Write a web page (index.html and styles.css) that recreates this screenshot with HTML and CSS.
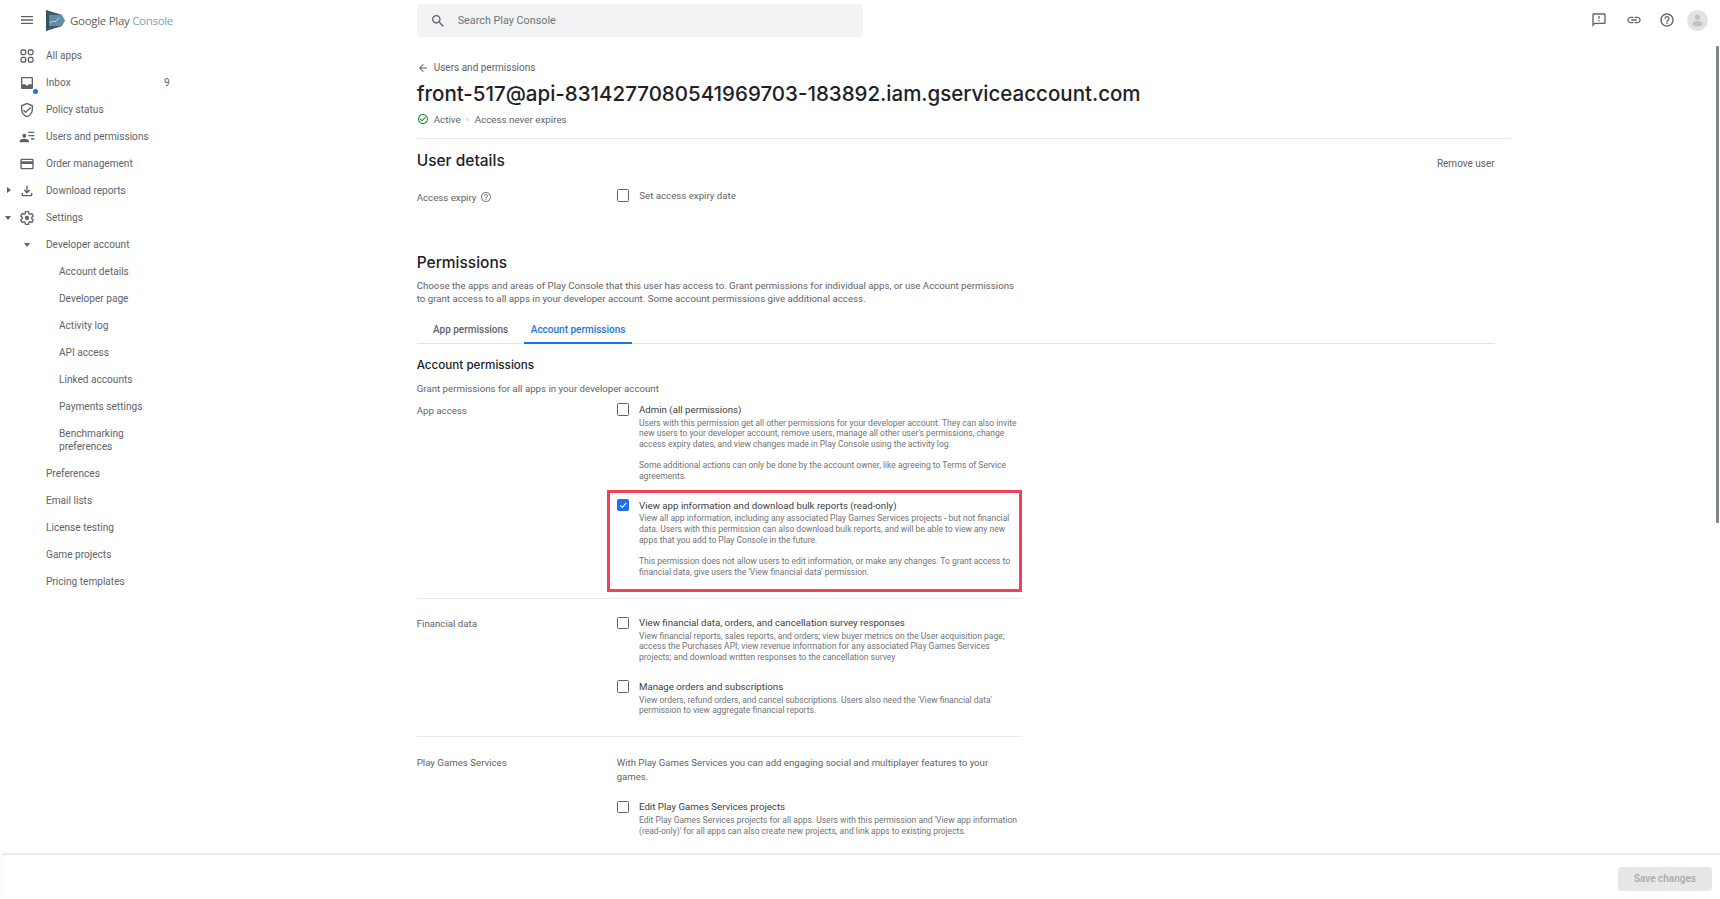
FILE: index.html
```html
<!DOCTYPE html>
<html lang="en">
<head>
<meta charset="utf-8">
<title>Google Play Console</title>
<link rel="stylesheet" href="styles.css">
</head>
<body>
<div class="app">
  <header class="topbar">
    <div class="brand">
      <svg class="ico menu" viewBox="0 0 24 24"><path d="M3 18h18v-2H3v2zm0-5h18v-2H3v2zm0-7v2h18V6H3z"/></svg>
      <svg class="logo" viewBox="0 0 19 21"><path d="M0 0l3 1.500V19.500L0 21z" fill="#37505c"/><path d="M3 1.500L16 5l3 5.500-3 5.500L3 19.500z" fill="#5f8fa8"/><path d="M0 0l16 5H3zM0 21l16-5H3z" fill="#3d5866"/><path d="M4 13l3-2 2 1 4-4" fill="none" stroke="#dbe7ed" stroke-width="1" stroke-dasharray="2 .6"/></svg>
      <span class="brand-name">Google Play <span class="brand-sub">Console</span></span>
    </div>
    <div class="search">
      <svg class="ico" viewBox="0 0 24 24"><path d="M15.500 14h-.79l-.28-.27C15.410 12.590 16 11.110 16 9.500 16 5.910 13.090 3 9.500 3S3 5.910 3 9.500 5.910 16 9.500 16c1.610 0 3.090-.59 4.230-1.570l.27.28v.79l5 4.990L20.490 19l-4.990-5zm-6 0C7.010 14 5 11.990 5 9.500S7.010 5 9.500 5 14 7.010 14 9.500 11.990 14 9.500 14z"/></svg>
      <span>Search Play Console</span>
    </div>
    <div class="actions">
      <svg class="ico" viewBox="0 0 24 24"><path d="M20 2H4c-1.100 0-1.990.9-1.990 2L2 22l4-4h14c1.100 0 2-.9 2-2V4c0-1.100-.9-2-2-2zm0 14H5.170L4 17.170V4h16v12zm-9-4h2v2h-2zm0-6h2v4h-2z"/></svg>
      <svg class="ico" viewBox="0 0 24 24"><path d="M3.900 12c0-1.710 1.390-3.100 3.100-3.100h4V7H7c-2.760 0-5 2.240-5 5s2.240 5 5 5h4v-1.900H7c-1.710 0-3.100-1.390-3.100-3.100zM8 13h8v-2H8v2zm9-6h-4v1.900h4c1.710 0 3.100 1.390 3.100 3.100s-1.390 3.100-3.100 3.100h-4V17h4c2.760 0 5-2.240 5-5s-2.240-5-5-5z"/></svg>
      <svg class="ico" viewBox="0 0 24 24"><path d="M11 18h2v-2h-2v2zm1-16C6.480 2 2 6.480 2 12s4.480 10 10 10 10-4.480 10-10S17.520 2 12 2zm0 18c-4.410 0-8-3.590-8-8s3.590-8 8-8 8 3.590 8 8-3.590 8-8 8zm0-14c-2.210 0-4 1.790-4 4h2c0-1.100.9-2 2-2s2 .9 2 2c0 2-3 1.750-3 5h2c0-2.250 3-2.500 3-5 0-2.210-1.790-4-4-4z"/></svg>
      <svg class="avatar" viewBox="0 0 21 21"><circle cx="10.500" cy="10.500" r="10.500" fill="#e3e3e3"/><circle cx="10.500" cy="7.200" r="2.600" fill="#c2c2c2"/><ellipse cx="10.500" cy="13.800" rx="5.200" ry="2.800" fill="#c2c2c2"/></svg>
    </div>
  </header>

  <div class="body">
    <nav class="sidebar">
      <a class="nav"><svg class="ico" viewBox="0 0 24 24"><g fill="none" stroke="#5f6368" stroke-width="2"><rect x="3" y="3" width="7" height="7" rx="2"/><rect x="14" y="3" width="7" height="7" rx="2"/><rect x="3" y="14" width="7" height="7" rx="2"/><rect x="14" y="14" width="7" height="7" rx="2"/></g></svg><span>All apps</span></a>
      <a class="nav"><span class="icon-wrap"><svg class="ico" viewBox="0 0 24 24"><path d="M19 3H5c-1.100 0-2 .9-2 2v14c0 1.100.9 2 2 2h14c1.100 0 2-.9 2-2V5c0-1.100-.9-2-2-2zm0 11h-4.990c0 1.100-.9 2-2 2s-2-.9-2-2H5V5h14v9z"/></svg><i class="dot"></i></span><span class="grow">Inbox</span><span class="count">9</span></a>
      <a class="nav"><svg class="ico" viewBox="0 0 24 24"><path d="M12 1L3 5v6c0 5.550 3.840 10.740 9 12 5.160-1.260 9-6.450 9-12V5l-9-4zm7 10c0 4.520-2.980 8.690-7 9.930-4.020-1.240-7-5.410-7-9.930V6.300l7-3.110 7 3.110V11z"/><path d="M7.410 11.590L6 13l4 4 8-8-1.410-1.420L10 14.170z"/></svg><span>Policy status</span></a>
      <a class="nav"><svg class="ico" viewBox="0 0 24 24"><circle cx="8" cy="10" r="3"/><path d="M1 20v-2c0-2.200 4.500-3.500 7-3.500s7 1.300 7 3.500v2zM14 4h9v2h-9zM14 9h9v2h-9zM18 14h5v2h-5z"/></svg><span>Users and permissions</span></a>
      <a class="nav"><svg class="ico" viewBox="0 0 24 24"><path d="M20 4H4c-1.110 0-1.990.89-1.990 2L2 18c0 1.110.89 2 2 2h16c1.110 0 2-.89 2-2V6c0-1.110-.89-2-2-2zm0 14H4v-6h16v6zm0-10H4V6h16v2z"/></svg><span>Order management</span></a>
      <a class="nav"><i class="tri tri-right"></i><svg class="ico" viewBox="0 0 24 24"><path d="M18 15v3H6v-3H4v3c0 1.100.9 2 2 2h12c1.100 0 2-.9 2-2v-3h-2zm-1-4l-1.410-1.410L13 12.170V4h-2v8.170L8.410 9.590 7 11l5 5 5-5z"/></svg><span>Download reports</span></a>
      <a class="nav"><i class="tri tri-down"></i><svg class="ico" viewBox="0 0 24 24"><circle cx="12" cy="12" r="3.200"/><path fill="none" stroke="#5f6368" stroke-width="2" d="M19.140 12.940c.04-.3.060-.61.060-.94 0-.32-.02-.64-.07-.94l2.030-1.580a.49.49 0 0 0 .12-.61l-1.920-3.320a.488.488 0 0 0-.59-.22l-2.390.96c-.5-.38-1.030-.7-1.620-.94l-.36-2.540a.484.484 0 0 0-.48-.41h-3.840c-.24 0-.43.17-.47.41l-.36 2.540c-.59.24-1.130.57-1.620.94l-2.390-.96c-.22-.08-.47 0-.59.22L2.740 8.870c-.12.21-.08.47.12.61l2.030 1.580c-.05.3-.09.63-.09.94s.02.64.07.94l-2.030 1.580a.49.49 0 0 0-.12.61l1.920 3.320c.12.22.37.29.59.22l2.390-.96c.5.38 1.030.7 1.620.94l.36 2.540c.05.24.24.41.48.41h3.840c.24 0 .44-.17.47-.41l.36-2.540c.59-.24 1.130-.56 1.620-.94l2.390.96c.22.08.47 0 .59-.22l1.920-3.320c.12-.22.07-.47-.12-.61l-2.010-1.580z"/></svg><span>Settings</span></a>
      <a class="nav"><i class="tri tri-down tri-sub"></i><span>Developer account</span></a>
      <a class="nav sub">Account details</a>
      <a class="nav sub">Developer page</a>
      <a class="nav sub">Activity log</a>
      <a class="nav sub">API access</a>
      <a class="nav sub">Linked accounts</a>
      <a class="nav sub">Payments settings</a>
      <a class="nav sub tall">Benchmarking<br>preferences</a>
      <a class="nav plain">Preferences</a>
      <a class="nav plain">Email lists</a>
      <a class="nav plain">License testing</a>
      <a class="nav plain">Game projects</a>
      <a class="nav plain">Pricing templates</a>
    </nav>

    <main class="content">
      <div class="back">
        <svg class="ico small" viewBox="0 0 24 24"><path d="M20 11H7.830l5.590-5.590L12 4l-8 8 8 8 1.410-1.410L7.830 13H20v-2z"/></svg>
        <span>Users and permissions</span>
      </div>
      <h1 class="title">front-517@api-8314277080541969703-183892.iam.gserviceaccount.com</h1>
      <div class="status">
        <svg class="ico small green" viewBox="0 0 24 24"><path d="M16.590 7.580L10 14.170l-3.590-3.580L5 12l5 5 8-8zM12 2C6.480 2 2 6.480 2 12s4.480 10 10 10 10-4.480 10-10S17.520 2 12 2zm0 18c-4.410 0-8-3.590-8-8s3.590-8 8-8 8 3.590 8 8-3.590 8-8 8z"/></svg>
        <span>Active</span><i class="sep"></i><span>Access never expires</span>
      </div>
      <hr class="rule wide">
      <div class="details-head">
        <h2 class="h2">User details</h2>
        <span class="remove">Remove user</span>
      </div>
      <div class="expiry">
        <div class="label expiry-label">Access expiry
          <svg class="ico help" viewBox="0 0 24 24"><path d="M11 18h2v-2h-2v2zm1-16C6.480 2 2 6.480 2 12s4.480 10 10 10 10-4.480 10-10S17.520 2 12 2zm0 18c-4.410 0-8-3.590-8-8s3.590-8 8-8 8 3.590 8 8-3.590 8-8 8zm0-14c-2.210 0-4 1.790-4 4h2c0-1.100.9-2 2-2s2 .9 2 2c0 2-3 1.750-3 5h2c0-2.250 3-2.500 3-5 0-2.210-1.790-4-4-4z"/></svg>
        </div>
        <div class="check-line"><i class="box"></i><span class="opt-title muted">Set access expiry date</span></div>
      </div>

      <h2 class="h2 perm-head">Permissions</h2>
      <p class="lead">Choose the apps and areas of Play Console that this user has access to. Grant permissions for individual apps, or use Account permissions<br>to grant access to all apps in your developer account. Some account permissions give additional access.</p>
      <div class="tabs">
        <span class="tab">App permissions</span>
        <span class="tab active">Account permissions</span>
      </div>
      <h3 class="h3">Account permissions</h3>
      <p class="grant">Grant permissions for all apps in your developer account</p>

      <section class="group first">
        <div class="label nudge">App access</div>
        <div class="opts">
          <div class="option">
            <i class="box"></i>
            <div>
              <div class="opt-title">Admin (all permissions)</div>
              <p class="desc">Users with this permission get all other permissions for your developer account. They can also invite<br>new users to your developer account, remove users, manage all other user's permissions, change<br>access expiry dates, and view changes made in Play Console using the activity log.</p>
              <p class="desc gap">Some additional actions can only be done by the account owner, like agreeing to Terms of Service<br>agreements.</p>
            </div>
          </div>
          <div class="option marked">
            <i class="box on"><svg viewBox="0 0 12 12"><path d="M2.500 6.200l2.500 2.500 4.600-5.200" fill="none" stroke="#fff" stroke-width="1.300"/></svg></i>
            <div>
              <div class="opt-title">View app information and download bulk reports (read-only)</div>
              <p class="desc">View all app information, including any associated Play Games Services projects - but not financial<br>data. Users with this permission can also download bulk reports, and will be able to view any new<br>apps that you add to Play Console in the future.</p>
              <p class="desc gap">This permission does not allow users to edit information, or make any changes. To grant access to<br>financial data, give users the 'View financial data' permission.</p>
            </div>
            <i class="highlight"></i>
          </div>
        </div>
      </section>
      <hr class="rule narrow">
      <section class="group tight">
        <div class="label nudge">Financial data</div>
        <div class="opts">
          <div class="option">
            <i class="box"></i>
            <div>
              <div class="opt-title">View financial data, orders, and cancellation survey responses</div>
              <p class="desc">View financial reports, sales reports, and orders; view buyer metrics on the User acquisition page;<br>access the Purchases API; view revenue information for any associated Play Games Services<br>projects; and download written responses to the cancellation survey</p>
            </div>
          </div>
          <div class="option">
            <i class="box"></i>
            <div>
              <div class="opt-title">Manage orders and subscriptions</div>
              <p class="desc">View orders, refund orders, and cancel subscriptions. Users also need the 'View financial data'<br>permission to view aggregate financial reports.</p>
            </div>
          </div>
        </div>
      </section>
      <hr class="rule narrow">
      <section class="group">
        <div class="label">Play Games Services</div>
        <div class="opts">
          <p class="games">With Play Games Services you can add engaging social and multiplayer features to your<br>games.</p>
          <div class="option">
            <i class="box"></i>
            <div>
              <div class="opt-title">Edit Play Games Services projects</div>
              <p class="desc">Edit Play Games Services projects for all apps. Users with this permission and 'View app information<br>(read-only)' for all apps can also create new projects, and link apps to existing projects.</p>
            </div>
          </div>
          <div class="option">
            <i class="box"></i>
            <div>
              <div class="opt-title">Publish Play Games Services projects</div>
            </div>
          </div>
        </div>
      </section>
    </main>
    <i class="scrollbar"></i>
  </div>

  <footer class="footer">
    <button class="save">Save changes</button>
  </footer>
</div>
</body>
</html>
```

FILE: styles.css
```css
* { box-sizing: border-box; }
html, body { margin: 0; height: 100%; overflow: hidden; background: #fff; }
body { font-family: Roboto, "Liberation Sans", sans-serif; font-size: 9.700px; color: #5f6368; }
h1, h2, h3, p { margin: 0; font-weight: 500; }
p { font-weight: 400; }
i { font-style: normal; display: block; }

.app { display: flex; flex-direction: column; height: 899px; }
.ico { width: 16px; height: 16px; fill: #5f6368; flex: none; display: block; }

/* top bar */
.topbar { height: 42px; flex: none; display: flex; align-items: center; }
.brand { width: 416.700px; display: flex; align-items: center; padding-left: 19px; padding-bottom: 2px; }
.logo { width: 19px; height: 21px; margin-left: 11px; flex: none; }
.brand-name { margin-left: 5px; font-family: "Open Sans", sans-serif; font-size: 11.500px; letter-spacing: -.3px; color: #5f6368; }
.brand-sub { color: #7f9fb0; }
.search { width: 446px; height: 33px; margin-bottom: 1px; background: #f1f3f4; border-radius: 4px; display: flex; align-items: center; padding-left: 13px; gap: 12px; font-size: 10.800px; color: #6f7377; }
.actions { margin-left: auto; display: flex; align-items: center; padding-right: 12px; padding-bottom: 2px; }
.actions .ico:nth-child(1) { margin-right: 19px; }
.actions .ico:nth-child(2) { margin-right: 17px; }
.actions .ico:nth-child(3) { margin-right: 12px; }
.avatar { width: 21px; height: 21px; display: block; }

.body { flex: 1; min-height: 0; display: flex; position: relative; overflow: hidden; }

/* sidebar */
.sidebar { width: 200px; flex: none; color: #5f6368; font-size: 10.100px; }
.nav { height: 27px; display: flex; align-items: center; padding-left: 19px; gap: 11px; position: relative; white-space: nowrap; }
.nav.sub { padding-left: 59px; }
.nav.plain { padding-left: 46px; }
.nav.tall { height: 40px; line-height: 13.500px; display: block; padding-top: 6.700px; }
.grow { width: 118px; }
.count { margin-left: -11px; }
.icon-wrap { position: relative; display: block; width: 16px; height: 16px; }
.dot { position: absolute; right: -3px; bottom: -3px; width: 5px; height: 5px; border-radius: 50%; background: #1a73e8; border: 0; }
.tri { position: absolute; width: 0; height: 0; }
.tri-right { left: 7px; top: 10px; border-left: 4px solid #5f6368; border-top: 3.500px solid transparent; border-bottom: 3.500px solid transparent; }
.tri-down { left: 5px; top: 12px; border-top: 4px solid #5f6368; border-left: 3.500px solid transparent; border-right: 3.500px solid transparent; }
.tri-sub { left: 24px; }
.nav:has(.tri-sub) { padding-left: 46px; }

/* content */
.content { flex: 1; min-width: 0; padding-left: 216.700px; padding-top: 19px; overflow: hidden; }
.back { display: flex; align-items: center; gap: 5px; height: 13.500px; font-size: 10px; }
.small { width: 12px; height: 12px; }
.title { font-family: Inter, Roboto, sans-serif; font-weight: 500; font-size: 20.500px; line-height: 30px; height: 30px; margin-top: 4px; color: #202124; white-space: nowrap; }
.status { display: flex; align-items: center; gap: 5px; height: 13.500px; margin-top: 4.200px; font-size: 9.800px; }
.green { fill: #1e8e3e; }
.sep { width: 3px; height: 3px; border-radius: 50%; background: #dadce0; margin: 0 .5px; }
.rule { border: 0; border-top: 1px solid #e8eaed; margin: 0; }
.wide { width: 1094px; margin-top: 12px; }
.narrow { width: 605px; }
.details-head { width: 1078px; display: flex; justify-content: space-between; margin-top: 11px; }
.h2 { font-family: Inter, Roboto, sans-serif; font-size: 15.500px; line-height: 22px; color: #202124; }
.remove { margin-top: 6.500px; color: #5f6368; line-height: 13.500px; font-size: 10px; }
.expiry { display: grid; grid-template-columns: 200px 1fr; height: 38px; margin-top: 8.500px; }
.label { line-height: 13.500px; color: #5f6368; }
.nudge { padding-top: 1px; }
.expiry-label { display: flex; align-items: center; gap: 4px; height: 13.500px; margin-top: 10px; }
.help { width: 12px; height: 12px; fill: #80868b; }
.check-line { display: flex; align-items: center; gap: 10.300px; margin-top: 8px; height: 13.500px; }

.box { width: 12.300px; height: 12.300px; border: 1.500px solid #5f6368; border-radius: 1.500px; flex: none; display: block; }
.box.on { background: #1a73e8; border-color: #1a73e8; padding: 0; }
.box.on svg { width: 100%; height: 100%; display: block; }

.perm-head { margin-top: 32.900px; }
.lead { line-height: 13.500px; margin-top: 5px; white-space: nowrap; }
.tabs { display: flex; gap: 8.500px; width: 1078px; height: 30px; margin-top: 8px; border-bottom: 1px solid #e0e3e7; padding-left: 9.300px; font-weight: 500; font-size: 10px; }
.tab { padding: 10px 7px 0; height: 30px; }
.tab.active { color: #1a73e8; border-bottom: 2px solid #1a73e8; }
.h3 { font-family: Inter, Roboto, sans-serif; font-size: 11.650px; line-height: 18px; color: #202124; margin-top: 12px; }
.grant { line-height: 13.500px; margin-top: 8px; }

.group { display: grid; grid-template-columns: 200px 405px; padding: 19.500px 0 20px; }
.group.first { padding-top: 7.800px; padding-bottom: 20px; }
.group.tight { padding-top: 17.500px; }
.opts { display: flex; flex-direction: column; gap: 17px; }
.option { display: grid; grid-template-columns: 12.300px 1fr; column-gap: 10px; position: relative; }
.option > .box { margin-top: .5px; }
.opt-title { line-height: 13.500px; color: #3c4043; white-space: nowrap; font-size: 9.700px; }
.muted { color: #5f6368; }
.desc { font-size: 8.530px; line-height: 10.670px; margin-top: 1.300px; color: #6f7377; white-space: nowrap; }
.desc.gap { margin-top: 10.670px; }
.games { line-height: 13.500px; white-space: nowrap; font-size: 9.600px; }
.highlight { position: absolute; left: -9.700px; right: -0.500px; top: -9px; bottom: -14px; border: 3px solid #f5405c; pointer-events: none; }

.scrollbar { position: absolute; right: 1.300px; top: 4px; width: 2.500px; height: 477px; background: #7f8589; border-radius: 1px; }

/* footer */
.footer { height: 45px; flex: none; background: #fff; border-top: 1px solid #e3e4e5; box-shadow: 0 -1px 2px rgba(0,0,0,.08); display: flex; justify-content: flex-end; align-items: flex-start; padding: 11.500px 8px 0 0; position: relative; margin-left: 2px; }
.save { width: 94px; height: 24px; border: 0; border-radius: 3px; background: #e6e7e7; color: #a6a8ab; font-family: inherit; font-size: 10px; font-weight: 500; padding: 0; }
```
